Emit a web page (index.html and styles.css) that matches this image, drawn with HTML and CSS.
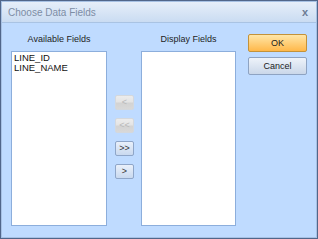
FILE: index.html
```html
<!DOCTYPE html>
<html lang="en">
<head>
    <meta charset="UTF-8">
    <title>Choose Data Fields</title>
    <link rel="stylesheet" href="styles.css">
</head>
<body>
    <div class="window">
        <div class="titlebar">
            <span class="title">Choose Data Fields</span>
            <span class="close">x</span>
        </div>
        <div class="content">
            <!-- available -->
            <div class="column list-col">
                <div class="label">Available Fields</div>
                <div class="listbox">
                    <div class="item">LINE_ID</div>
                    <div class="item">LINE_NAME</div>
                </div>
            </div>

            <!-- move buttons -->
            <div class="arrows">
                <button class="arrow" disabled>&lt;</button>
                <button class="arrow" disabled>&lt;&lt;</button>
                <button class="arrow">&gt;&gt;</button>
                <button class="arrow">&gt;</button>
            </div>

            <!-- display -->
            <div class="column list-col right">
                <div class="label">Display Fields</div>
                <div class="listbox"></div>
            </div>

            <div class="actions">
                <button class="btn ok">OK</button>
                <button class="btn">Cancel</button>
            </div>
        </div>
    </div>
</body>
</html>
```

FILE: styles.css
```css
* {
    box-sizing: border-box;
    margin: 0;
    padding: 0;
}

body {
    font-family: "Liberation Sans", Arial, sans-serif;
    font-size: 9px;
    background: #ffffff;
}

.window {
    width: 318px;
    height: 239px;
    border: 1px solid #51668a;
    box-shadow: inset 0 0 0 1px #a7c1e4;
    background: #bfdbff;
    display: flex;
    flex-direction: column;
}

.titlebar {
    height: 21px;
    display: flex;
    align-items: center;
    justify-content: space-between;
    padding: 0 8px 0 6px;
    background: linear-gradient(#e6eef9, #cadcf2);
    border-bottom: 1px solid #a9c3e3;
    margin: 1px 1px 0 1px;
}

.title {
    color: #7d8da5;
    font-size: 10px;
}

.close {
    color: #6c7c94;
    font-size: 11px;
    font-weight: bold;
}

.content {
    flex: 1;
    display: flex;
    padding: 9px 0 0 10px;
}

.list-col {
    width: 96px;
    display: flex;
    flex-direction: column;
}

.list-col.right {
    width: 95px;
    margin-left: 7px;
}

.label {
    height: 14px;
    line-height: 14px;
    text-align: center;
    color: #1e1e1e;
    margin-bottom: 5px;
}

.listbox {
    height: 175px;
    background: #ffffff;
    border: 1px solid #8caedc;
    padding: 1px 2px;
}

.item {
    color: #111;
    font-size: 9.5px;
    line-height: 10px;
}

.arrows {
    width: 19px;
    margin-left: 8px;
    padding-top: 63px;
    display: flex;
    flex-direction: column;
    gap: 8px;
}

.arrow {
    width: 19px;
    height: 15px;
    font-family: "Liberation Sans", Arial, sans-serif;
    font-size: 9px;
    line-height: 13px;
    color: #333;
    border: 1px solid #8fa6c8;
    border-radius: 2px;
    background: linear-gradient(#e9f0fa, #c9d9ef);
}

.arrow:disabled {
    color: #b9b9b9;
    border-color: #d4d8dd;
    background: linear-gradient(#ececec 0, #e4e4e4 45%, #d3d3d3 55%, #d8d8d8 100%);
}

.actions {
    width: 59px;
    margin-left: 12px;
    padding-top: 2px;
    display: flex;
    flex-direction: column;
    gap: 5px;
}

.btn {
    height: 18px;
    font-family: "Liberation Sans", Arial, sans-serif;
    font-size: 9px;
    color: #1a1a1a;
    border: 1px solid #8ea3c2;
    border-radius: 2px;
    background: linear-gradient(#eef3fa, #cad7e9);
}

.btn.ok {
    border-color: #c3923a;
    background: linear-gradient(#ffe6a8, #ffb84a);
}
```
